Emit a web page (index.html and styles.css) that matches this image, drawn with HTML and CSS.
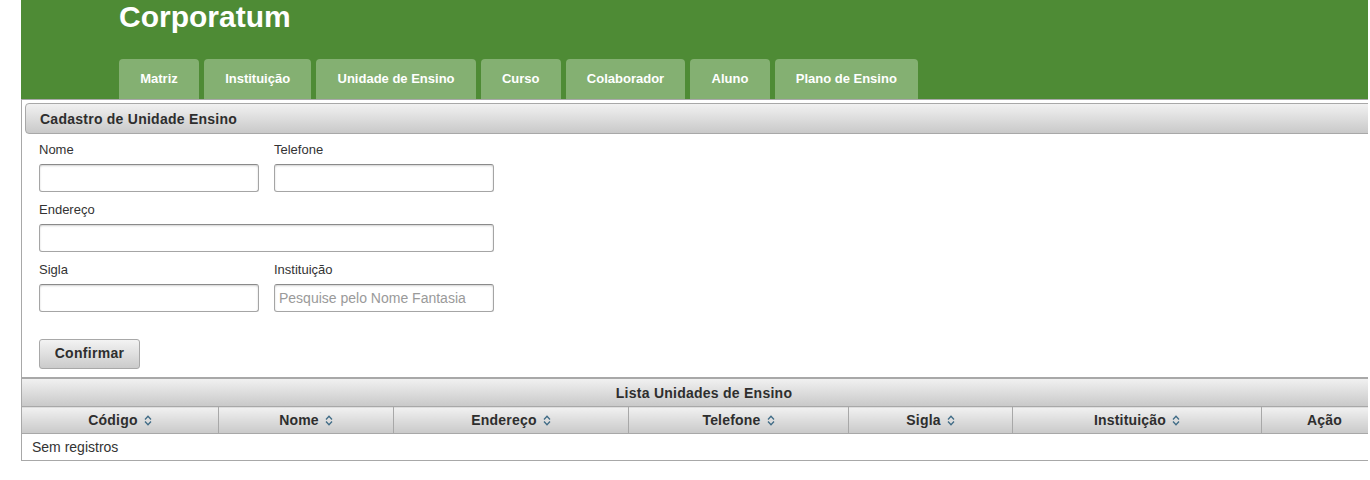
FILE: index.html
```html
<!DOCTYPE html>
<html lang="pt-BR">
<head>
<meta charset="utf-8">
<title>Corporatum</title>
<link rel="stylesheet" href="styles.css">
</head>
<body>
<div class="page">
  <header class="topbar">
    <h1 class="brand">Corporatum</h1>
    <nav class="tabs">
      <a class="tab">Matriz</a>
      <a class="tab">Instituição</a>
      <a class="tab">Unidade de Ensino</a>
      <a class="tab">Curso</a>
      <a class="tab">Colaborador</a>
      <a class="tab">Aluno</a>
      <a class="tab">Plano de Ensino</a>
    </nav>
  </header>

  <section class="panel">
    <div class="panel-title">Cadastro de Unidade Ensino</div>
    <form class="form">
      <div class="row">
        <div class="field">
          <label class="lbl">Nome</label>
          <input class="inp" type="text">
        </div>
        <div class="field">
          <label class="lbl">Telefone</label>
          <input class="inp" type="text">
        </div>
      </div>
      <div class="row">
        <div class="field">
          <label class="lbl">Endereço</label>
          <input class="inp wide" type="text">
        </div>
      </div>
      <div class="row">
        <div class="field">
          <label class="lbl">Sigla</label>
          <input class="inp" type="text">
        </div>
        <div class="field">
          <label class="lbl">Instituição</label>
          <input class="inp" type="text" placeholder="Pesquise pelo Nome Fantasia">
        </div>
      </div>
      <button class="btn" type="button">Confirmar</button>
    </form>
  </section>

  <section class="datatable">
    <div class="dt-title">Lista Unidades de Ensino</div>
    <table class="dt">
      <colgroup>
        <col class="c1"><col class="c2"><col class="c3"><col class="c4"><col class="c5"><col class="c6"><col class="c7">
      </colgroup>
      <thead>
        <tr>
          <th>Código<svg class="sort" viewBox="0 0 8 11"><path d="M1 4.5 L4 1.3 L7 4.5 M1 6.5 L4 9.7 L7 6.5"/></svg></th>
          <th>Nome<svg class="sort" viewBox="0 0 8 11"><path d="M1 4.5 L4 1.3 L7 4.5 M1 6.5 L4 9.7 L7 6.5"/></svg></th>
          <th>Endereço<svg class="sort" viewBox="0 0 8 11"><path d="M1 4.5 L4 1.3 L7 4.5 M1 6.5 L4 9.7 L7 6.5"/></svg></th>
          <th>Telefone<svg class="sort" viewBox="0 0 8 11"><path d="M1 4.5 L4 1.3 L7 4.5 M1 6.5 L4 9.7 L7 6.5"/></svg></th>
          <th>Sigla<svg class="sort" viewBox="0 0 8 11"><path d="M1 4.5 L4 1.3 L7 4.5 M1 6.5 L4 9.7 L7 6.5"/></svg></th>
          <th>Instituição<svg class="sort" viewBox="0 0 8 11"><path d="M1 4.5 L4 1.3 L7 4.5 M1 6.5 L4 9.7 L7 6.5"/></svg></th>
          <th>Ação</th>
        </tr>
      </thead>
      <tbody>
        <tr><td class="empty" colspan="7">Sem registros</td></tr>
      </tbody>
    </table>
  </section>
</div>
</body>
</html>
```

FILE: styles.css
```css
html, body {
  margin: 0;
  padding: 0;
  background: #ffffff;
}

body {
  font-family: "Liberation Sans", Arial, sans-serif;
  color: #333333;
}

.page {
  margin-left: 21px;
  width: 1347px;
  overflow: hidden;
}

/* ---------- top bar ---------- */
.topbar {
  background: #4e8b35;
  height: 99px;
  padding-left: 98px;
  display: flex;
  flex-direction: column;
  box-sizing: border-box;
}

.brand {
  margin: 0;
  font-size: 30px;
  line-height: 33px;
  font-weight: bold;
  color: #ffffff;
}

.tabs {
  margin-top: 26px;
  display: flex;
  gap: 5px;
  height: 40px;
}

.tab {
  display: flex;
  align-items: center;
  padding: 0 21.2px 2px;
  background: #84b072;
  border-radius: 4px 4px 0 0;
  color: #ffffff;
  font-size: 13px;
  font-weight: bold;
  text-decoration: none;
}

/* ---------- form panel ---------- */
.panel {
  width: 1380px;
  border: 1px solid #a8a8a8;
  border-right: 0;
  padding: 3px;
  box-sizing: border-box;
}

.panel-title {
  height: 31px;
  box-sizing: border-box;
  border: 1px solid #a8a8a8;
  border-radius: 4px;
  background: linear-gradient(#f1f1f1, #c9c9c9);
  padding: 2px 0 0 14px;
  font-size: 14px;
  font-weight: bold;
  letter-spacing: 0.25px;
  line-height: 27px;
  color: #2e2e2e;
}

.form {
  padding: 8px 14px 5px;
  display: flex;
  flex-direction: column;
  gap: 10px;
}

.row {
  display: flex;
  gap: 15px;
}

.field {
  display: flex;
  flex-direction: column;
  gap: 7px;
}

.lbl {
  font-size: 13px;
  line-height: 15px;
  color: #333333;
}

.inp {
  width: 220px;
  height: 28px;
  box-sizing: border-box;
  margin: 0;
  border: 1px solid #a5a5a5;
  border-top-color: #8a8a8a;
  border-radius: 3px;
  box-shadow: inset 0 1px 2px rgba(0, 0, 0, 0.18);
  padding: 0 4px;
  font-family: "Liberation Sans", Arial, sans-serif;
  font-size: 14px;
  color: #333333;
  background: #ffffff;
}

.inp::placeholder {
  color: #9a9a9a;
}

.inp.wide {
  width: 455px;
}

.btn {
  margin-top: 17px;
  align-self: flex-start;
  width: 101px;
  height: 30px;
  box-sizing: border-box;
  border: 1px solid #a8a8a8;
  border-radius: 3px;
  background: linear-gradient(#f3f3f3, #cbcbcb);
  font-family: "Liberation Sans", Arial, sans-serif;
  font-size: 14px;
  font-weight: bold;
  letter-spacing: 0.3px;
  color: #2e2e2e;
  padding: 0 0 2px;
}

/* ---------- data table ---------- */
.datatable {
  width: 1366px;
}

.dt-title {
  height: 28px;
  box-sizing: border-box;
  border: 1px solid #a8a8a8;
  border-bottom: 0;
  background: linear-gradient(#f1f1f1, #c9c9c9);
  text-align: center;
  font-size: 14px;
  font-weight: bold;
  letter-spacing: 0.25px;
  line-height: 28px;
  color: #2e2e2e;
}

.dt {
  width: 1366px;
  border-collapse: collapse;
  table-layout: fixed;
}

.c1 { width: 197px; }
.c2 { width: 175px; }
.c3 { width: 235px; }
.c4 { width: 220px; }
.c5 { width: 164px; }
.c6 { width: 249px; }
.c7 { width: 126px; }

.dt th {
  height: 27px;
  box-sizing: border-box;
  border: 1px solid #a8a8a8;
  background: linear-gradient(#f1f1f1, #c9c9c9);
  font-size: 14px;
  font-weight: bold;
  letter-spacing: 0.2px;
  color: #2e2e2e;
  text-align: center;
  padding: 0 0 1px;
  white-space: nowrap;
}

.sort {
  width: 8px;
  height: 11px;
  margin-left: 6px;
  vertical-align: -1px;
  fill: none;
  stroke: #3f6b86;
  stroke-width: 1.3;
}

.dt td {
  height: 27px;
  box-sizing: border-box;
  border: 1px solid #a8a8a8;
  padding: 0 10px;
  font-size: 14px;
  color: #333333;
}
```
